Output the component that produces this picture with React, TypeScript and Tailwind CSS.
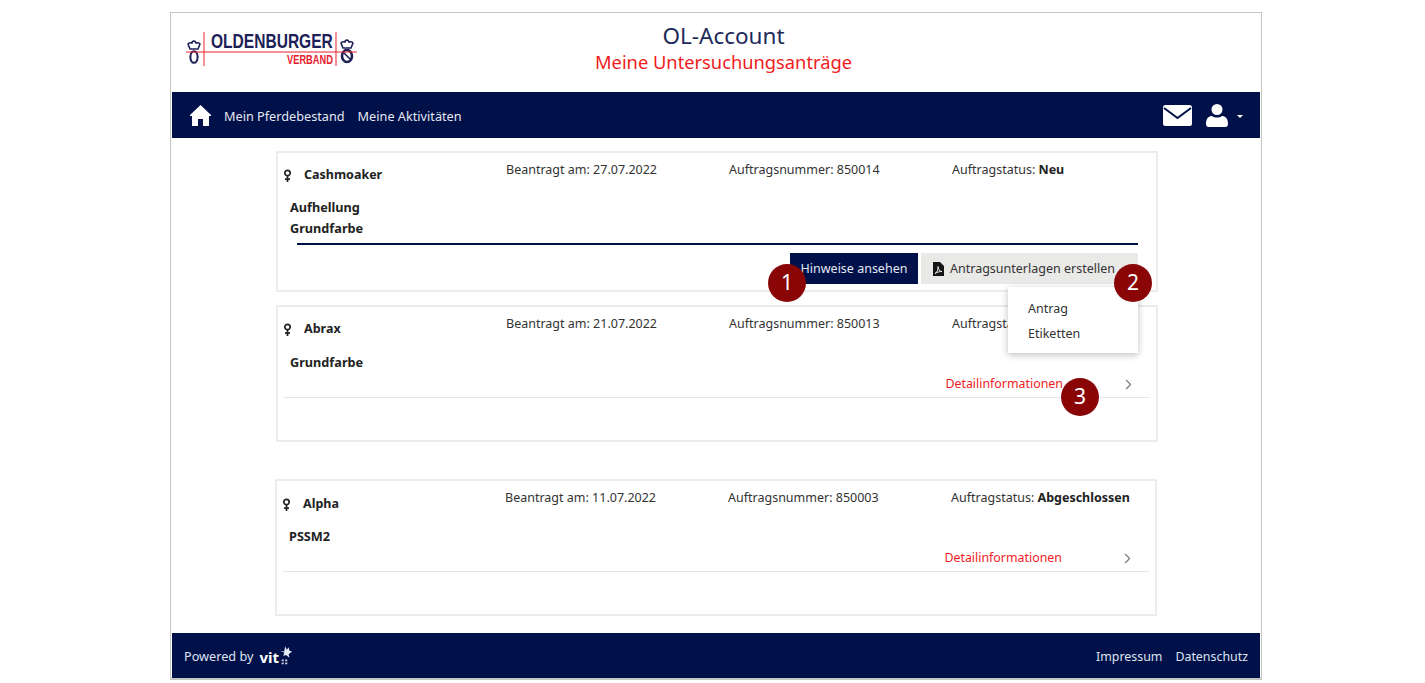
import React from "react";
import { ChevronRight } from "lucide-react";

const Crown: React.FC<{ x: number; y: number }> = ({ x, y }) => (
  <path
    d={`M${x} ${y + 4}c1-2 3-1 4-1 0-2 3-3 4 0 1 0 3-1 4 1l-2 5h-8z`}
    fill="#fff"
    stroke="#1d2057"
    strokeWidth="1.6"
  />
);

const Logo: React.FC = () => (
  <svg width="174" height="42" viewBox="0 0 174 42" className="block overflow-visible">
    <Crown x={2} y={11} />
    <ellipse cx="8" cy="28" rx="3.6" ry="5.8" fill="none" stroke="#1d2057" strokeWidth="2" />
    <Crown x={155} y={10} />
    <ellipse cx="161" cy="27" rx="5" ry="6" fill="none" stroke="#1d2057" strokeWidth="2.6" />
    <path d="M158 24l6 6" stroke="#1d2057" strokeWidth="1.6" />
    <path d="M0 23h171M18 3v34M150 3v34" stroke="#e8202c" strokeWidth="1" />
    <text transform="translate(25 19) scale(0.778 1)" fontFamily="Liberation Sans" fontWeight="700" fontSize="20" fill="#1d2057">
      OLDENBURGER
    </text>
    <text transform="translate(101 35) scale(0.775 1)" fontFamily="Liberation Sans" fontWeight="700" fontSize="12" fill="#e8202c">
      VERBAND
    </text>
  </svg>
);

const HomeIcon: React.FC = () => (
  <svg width="21" height="21" viewBox="0 0 21 21" fill="#fff">
    <path d="M10.500 0L21 10v1h-2v10h-6v-7H8v7H2V11H0v-1z" />
  </svg>
);

const MailIcon: React.FC = () => (
  <svg width="29" height="21" viewBox="0 0 29 21" className="ml-auto">
    <rect width="29" height="21" rx="2.500" fill="#fff" />
    <path d="M1 3l13.500 10L28 3" fill="none" stroke="#001049" strokeWidth="2" />
  </svg>
);

const UserIcon: React.FC = () => (
  <svg width="22" height="23" viewBox="0 0 22 23" fill="#fff" className="ml-[14px]">
    <circle cx="11" cy="5.500" r="5.500" />
    <path d="M0 20c0-6 3-8 6-8 1.500 1 3 1.500 5 1.500s3.500-.5 5-1.500c3 0 6 2 6 8 0 2-1 3-3 3H3c-2 0-3-1-3-3z" />
  </svg>
);

const PdfIcon: React.FC = () => (
  <svg width="11" height="14" viewBox="0 0 11 14" className="mb-[2px] mr-[6px] shrink-0">
    <path d="M0 0h7l4 4v10H0z" fill="#151515" />
    <path d="M2 11.500c2-1 3.500-4 3-7 0 3 2 5 4 5-2 0-5 .5-7 2z" fill="none" stroke="#fff" strokeWidth="0.9" />
  </svg>
);

const Badge: React.FC<{ n: number; className: string }> = ({ n, className }) => (
  <div className={`absolute flex h-[38px] w-[38px] items-center justify-center rounded-full bg-[#8a0606] text-[21px] text-white ${className}`}>
    {n}
  </div>
);

const FemaleIcon: React.FC = () => (
  <svg width="9" height="13" viewBox="0 0 9 13" fill="none" stroke="#222" strokeWidth="1.7" className="ml-[-1px] shrink-0">
    <circle cx="4.500" cy="4" r="2.700" />
    <path d="M4.500 7v6M2 10.200h5" />
  </svg>
);

type InfoProps = { name: string; date: string; nr: string; status?: string; nameClass: string };

const InfoRow: React.FC<InfoProps> = ({ name, date, nr, status, nameClass }) => (
  <div className="flex items-start text-[12.5px] leading-[16px] text-[#333]">
    <div className={`flex w-[222px] items-center ${nameClass}`}>
      <FemaleIcon />
      <span className="ml-[12px] font-bold text-[#222]">{name}</span>
    </div>
    <div className="w-[223px]">Beantragt am: {date}</div>
    <div className="w-[223px]">Auftragsnummer: {nr}</div>
    <div>
      Auftragstatus: <b className="text-[#222]">{status}</b>
    </div>
  </div>
);

const DetailRow: React.FC = () => (
  <div className="flex h-[25px] items-center justify-end border-b border-[#e6e6e6] pb-[3px] pt-[1px] text-[12.400px] text-[#f01c24]">
    <span>Detailinformationen</span>
    <ChevronRight size={17} strokeWidth={1.5} className="ml-[57px] mr-[13px] text-[#777]" />
  </div>
);

const App: React.FC = () => {
  return (
    <div className="h-[683px] w-[1425px] overflow-hidden bg-white pl-[170px] pt-[12px] font-['Noto_Sans',sans-serif]">
      <div className="relative flex h-[668px] w-[1092px] flex-col border border-b-2 border-[#c4c4c4] bg-white px-px">
        <header className="relative flex h-[79px] shrink-0 flex-col items-center pl-[15px] pt-[8px]">
          <div className="absolute left-[14px] top-[16px]">
            <Logo />
          </div>
          <h1 className="text-[22.500px] leading-[30px] text-[#1d2a5a]">OL-Account</h1>
          <h2 className="text-[18.300px] leading-[22px] text-[#f01c1c]">Meine Untersuchungsanträge</h2>
        </header>

        <nav className="flex h-[46px] shrink-0 items-center bg-[#001049] pl-[18px] pr-[17px] text-[12.700px] text-[#e4e8f2]">
          <HomeIcon />
          <a className="ml-[13px] mt-[4px]">Mein Pferdebestand</a>
          <a className="ml-[13px] mt-[4px]">Meine Aktivitäten</a>
          <MailIcon />
          <UserIcon />
          <span className="ml-[9px] mt-[3px] h-0 w-0 border-x-[3px] border-t-[3px] border-x-transparent border-t-white" />
        </nav>

        <main className="relative flex-1 pl-[104px] pt-[13px]">
          <section className="h-[141px] w-[882px] border-2 border-[#ececec] px-[6px] pt-[9px]">
            <InfoRow name="Cashmoaker" date="27.07.2022" nr="850014" status="Neu" nameClass="pt-[5px]" />
            <div className="ml-[6px] mt-[14px] text-[12.700px] font-bold leading-[21px] text-[#222]">
              <div>Aufhellung</div>
              <div>Grundfarbe</div>
            </div>
            <div className="ml-[13px] mr-[12px] mt-[4px] border-t-2 border-[#001049]" />
            <div className="mr-[12px] mt-[8px] flex justify-end gap-[3px] text-[12.500px]">
              <button className="h-[31px] w-[128px] bg-[#001049] pt-[2px] text-[#e4e8f2]">Hinweise ansehen</button>
              <button className="flex h-[31px] w-[217px] items-center bg-[#e9e9e7] pl-[12px] pt-[2px] text-[#333]">
                <PdfIcon />
                Antragsunterlagen erstellen
              </button>
            </div>
          </section>

          <section className="mt-[13px] h-[137px] w-[882px] border-2 border-[#ececec] px-[6px] pt-[9px]">
            <InfoRow name="Abrax" date="21.07.2022" nr="850013" nameClass="pt-[5px]" />
            <div className="ml-[6px] mt-[15px] text-[12.700px] font-bold leading-[21px] text-[#222]">Grundfarbe</div>
            <DetailRow />
          </section>

          <section className="ml-[-1px] mt-[37px] h-[137px] w-[882px] border-2 border-[#ececec] px-[6px] pt-[9px]">
            <InfoRow name="Alpha" date="11.07.2022" nr="850003" status="Abgeschlossen" nameClass="pt-[6px]" />
            <div className="ml-[6px] mt-[14px] text-[12.700px] font-bold leading-[21px] text-[#222]">PSSM2</div>
            <DetailRow />
          </section>

          <div className="absolute left-[836px] top-[149px] flex h-[66px] w-[130px] flex-col justify-center gap-[5px] bg-white pl-[20px] pt-[3px] text-[12.500px] leading-[20px] text-[#333] shadow-[0_2px_7px_rgba(0,0,0,0.25)]">
            <span>Antrag</span>
            <span>Etiketten</span>
          </div>
          <Badge n={1} className="left-[596px] top-[126px]" />
          <Badge n={2} className="left-[942px] top-[126px]" />
          <Badge n={3} className="left-[889px] top-[240px]" />
        </main>

        <footer className="flex h-[45px] shrink-0 items-center bg-[#001049] pl-[12px] pr-[12px] pt-[3px] text-[12.400px] text-[#dfe3ef]">
          <span className="text-[12.700px]">Powered by</span>
          <b className="ml-[6px] text-[15px] text-white">vit</b>
          <svg width="14" height="22" viewBox="0 0 16 22" className="mb-[5px]">
            <path d="M1 6l5 1 1-6 2 4 2-3 1 4 3 1-4 3 1 4-4-3-3 1 1-4z" fill="#e8ecf5" />
            <path d="M3 16h2.500v2H3zM7 16h2.500v2H7zM3 19.500h2.500v2H3zM7 19.500h2.500v2H7z" fill="#c8cede" />
          </svg>
          <span className="ml-auto">Impressum</span>
          <span className="ml-[13px]">Datenschutz</span>
        </footer>
      </div>
    </div>
  );
};

export default App;
